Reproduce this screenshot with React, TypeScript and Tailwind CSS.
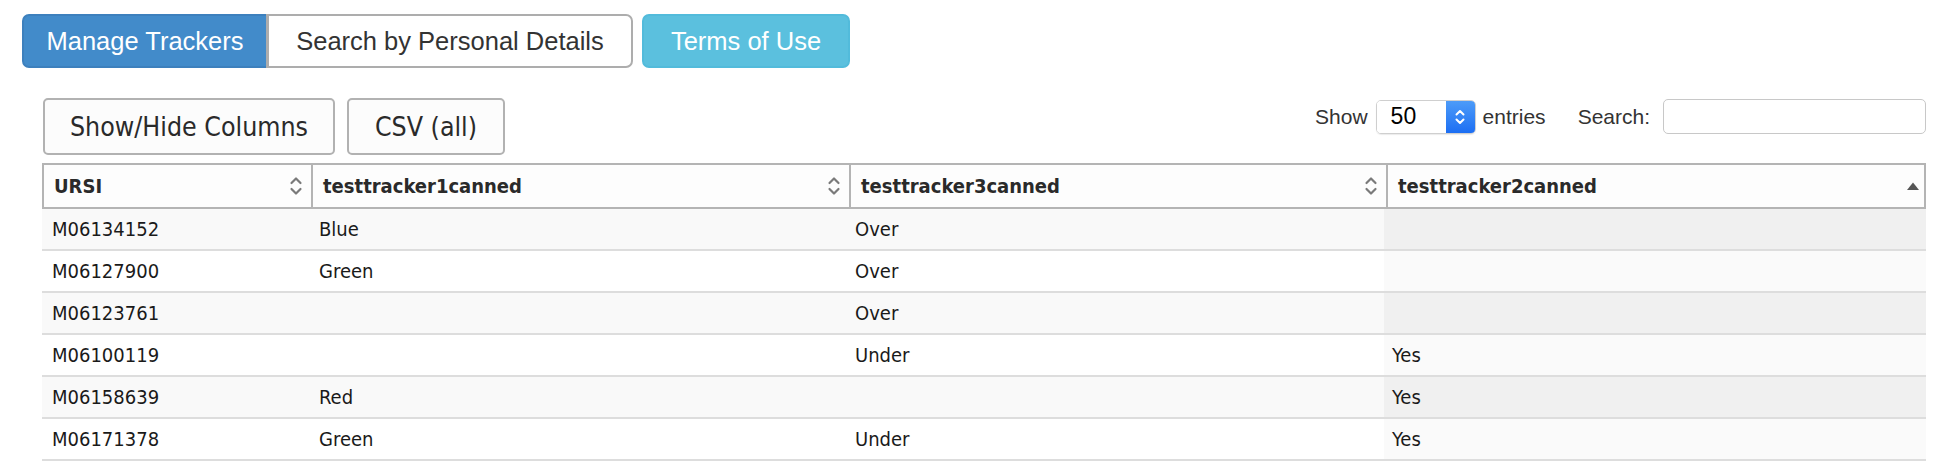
import React from "react";

const HELV = "font-['Liberation_Sans',Arial,sans-serif]";
const TBL = "font-['DejaVu_Sans_Condensed','DejaVu_Sans',sans-serif] [font-stretch:condensed]";

type Row = { ursi: string; t1: string; t3: string; t2: string };

const ROWS: Row[] = [
  { ursi: "M06134152", t1: "Blue", t3: "Over", t2: "" },
  { ursi: "M06127900", t1: "Green", t3: "Over", t2: "" },
  { ursi: "M06123761", t1: "", t3: "Over", t2: "" },
  { ursi: "M06100119", t1: "", t3: "Under", t2: "Yes" },
  { ursi: "M06158639", t1: "Red", t3: "", t2: "Yes" },
  { ursi: "M06171378", t1: "Green", t3: "Under", t2: "Yes" },
];

const SortBoth = () => (
  <svg width="14" height="22" viewBox="0 0 14 22" fill="none" stroke="#7a7a7a" strokeWidth="2.2" strokeLinecap="round" strokeLinejoin="round" aria-hidden>
    <path d="M2.5 8 L7 3.5 L11.5 8" />
    <path d="M2.5 14 L7 18.5 L11.5 14" />
  </svg>
);

const SortAsc = () => (
  <svg width="14" height="10" viewBox="0 0 14 10" aria-hidden>
    <path d="M1 9 L7 1.5 L13 9 Z" fill="#555" />
  </svg>
);

const HeadCell = ({ label, asc, first }: { label: string; asc?: boolean; first?: boolean }) => (
  <div className={`flex items-center justify-between pl-[10px] pr-[8px] ${first ? "" : "border-l-2 border-[#b4b4b4]"}`}>
    <span className="font-bold text-[20px] text-[#2a2a2a]">{label}</span>
    {asc ? <SortAsc /> : <SortBoth />}
  </div>
);

export default function App() {
  return (
    <div className="bg-white w-[1952px] h-[462px] overflow-hidden">
      {/* top nav buttons */}
      <div className={`flex items-start pt-[14px] pl-[22px] ${HELV}`}>
        <div className="flex">
          <button className="w-[246px] h-[54px] bg-[#428bca] border-2 border-[#3d80bd] rounded-l-[7px] text-white text-[25.5px]">
            Manage Trackers
          </button>
          <button className="w-[367px] h-[54px] bg-white border-2 border-l-[3px] border-[#adadad] rounded-r-[7px] text-[#333] text-[25.5px] -ml-[2px]">
            Search by Personal Details
          </button>
        </div>
        <button className="ml-[9px] w-[208px] h-[54px] bg-[#5bc0de] border-2 border-[#52bbdb] rounded-[7px] text-white text-[25.5px]">
          Terms of Use
        </button>
      </div>

      <div className="ml-[42px] w-[1884px] mt-[30px]">
        {/* toolbar */}
        <div className="flex justify-between items-start">
          <div className={`flex gap-[12px] pl-[1px] ${TBL}`}>
            <button className="w-[292px] h-[57px] bg-[#fcfcfc] border-2 border-[#b2b2b2] rounded-[5px] text-[26.5px] text-[#2a2a2a]">
              Show/Hide Columns
            </button>
            <button className="w-[158px] h-[57px] bg-[#fcfcfc] border-2 border-[#b2b2b2] rounded-[5px] text-[26.5px] text-[#2a2a2a]">
              CSV (all)
            </button>
          </div>
          <div className={`flex items-center mt-[1px] text-[21px] text-[#333] ${HELV}`}>
            <span>Show</span>
            <div className="ml-[8px] flex w-[100px] h-[34px] rounded-[5px] border border-[#cfcfcf] overflow-hidden shadow-[0_1px_1px_rgba(0,0,0,0.08)]">
              <div className="flex-1 flex items-center pl-[14px] text-[23px] text-black bg-white">50</div>
              <div className="w-[29px] flex items-center justify-center bg-gradient-to-b from-[#4d9bf8] to-[#1c6ef3]">
                <svg width="12" height="20" viewBox="0 0 12 20" fill="none" stroke="white" strokeWidth="2" strokeLinecap="round" strokeLinejoin="round" aria-hidden>
                  <path d="M2.5 7.5 L6 4 L9.5 7.5" />
                  <path d="M2.5 12.5 L6 16 L9.5 12.5" />
                </svg>
              </div>
            </div>
            <span className="ml-[7px]">entries</span>
            <span className="ml-[32px]">Search:</span>
            <input className="ml-[13px] w-[263px] h-[35px] rounded-[5px] border border-[#c8c8c8] bg-white outline-none" />
          </div>
        </div>

        {/* table */}
        <div className={`mt-[8px] ${TBL}`}>
          <div className="grid grid-cols-[267px_538px_537px_542px] h-[46px] border-2 border-[#b4b4b4] bg-[#fdfdfd]">
            <HeadCell label="URSI" first />
            <HeadCell label="testtracker1canned" />
            <HeadCell label="testtracker3canned" />
            <HeadCell label="testtracker2canned" asc />
          </div>
          {ROWS.map((r, i) => {
            const odd = i % 2 === 0;
            return (
              <div
                key={r.ursi}
                className={`grid grid-cols-[267px_538px_537px_542px] h-[42px] border-b-2 border-[#dddddd] text-[20px] text-[#1a1a1a] ${odd ? "bg-[#f9f9f9]" : "bg-white"}`}
              >
                <div className="flex items-center pl-[10px]">{r.ursi}</div>
                <div className="flex items-center pl-[10px]">{r.t1}</div>
                <div className="flex items-center pl-[8px]">{r.t3}</div>
                <div className={`flex items-center pl-[8px] ${odd ? "bg-[#f0f0f0]" : "bg-[#fafafa]"}`}>{r.t2}</div>
              </div>
            );
          })}
        </div>
      </div>
    </div>
  );
}
